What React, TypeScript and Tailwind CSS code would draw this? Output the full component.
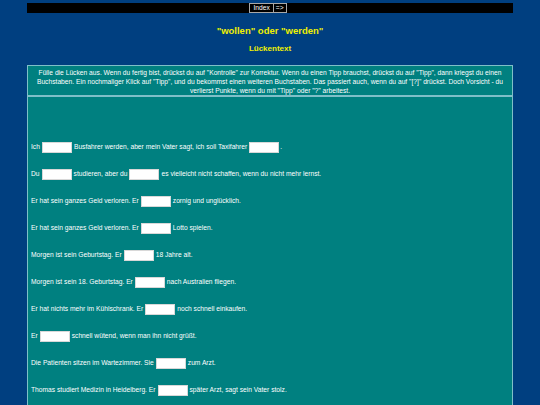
import React from "react";

type Part = string | null;

const rows: Part[][] = [
  ["Ich", null, "Busfahrer werden, aber mein Vater sagt, ich soll Taxifahrer", null, "."],
  ["Du", null, "studieren, aber du", null, "es vielleicht nicht schaffen, wenn du nicht mehr lernst."],
  ["Er hat sein ganzes Geld verloren. Er", null, "zornig und unglücklich."],
  ["Er hat sein ganzes Geld verloren. Er", null, "Lotto spielen."],
  ["Morgen ist sein Geburtstag. Er", null, "18 Jahre alt."],
  ["Morgen ist sein 18. Geburtstag. Er", null, "nach Australien fliegen."],
  ["Er hat nichts mehr im Kühlschrank. Er", null, "noch schnell einkaufen."],
  ["Er", null, "schnell wütend, wenn man ihn nicht grüßt."],
  ["Die Patienten sitzen im Wartezimmer. Sie", null, "zum Arzt."],
  ["Thomas studiert Medizin in Heidelberg. Er", null, "später Arzt, sagt sein Vater stolz."],
];

function Gap({ last }: { last?: boolean }) {
  return (
    <span
      className={
        last
          ? "inline-block w-[30px] h-[11px] bg-white border border-[#d8d8d8] align-middle ml-[2px] mr-[1px]"
          : "inline-block w-[30px] h-[11px] bg-white border border-[#d8d8d8] align-middle mx-[2px]"
      }
    />
  );
}

export default function App() {
  return (
    <div className="h-[405px] overflow-hidden bg-[#003f80] font-['Liberation_Sans',Arial,sans-serif] text-white">
      <div className="mx-auto w-[486px] pt-[3px]">
        <div className="h-[10px] bg-black flex justify-center pr-[4px]">
          <div className="flex h-full text-[6.7px] leading-[8px]">
            <div className="border border-[#a8a8a8] px-[3px] flex items-center">Index</div>
            <div className="border border-[#a8a8a8] border-l-0 px-[2px] flex items-center">=&gt;</div>
          </div>
        </div>
        <h1 className="mt-[12px] text-center font-bold text-[9.5px] leading-[12px] text-[#f0f000]">
          "wollen" oder "werden"
        </h1>
        <h2 className="mt-[7px] text-center font-bold text-[8px] leading-[10px] text-[#f0f000]">
          Lückentext
        </h2>
        <div className="mt-[11px] bg-[#008080] border border-[#7fbfc8]">
          <div className="border-b-2 border-[#7fbfc8] text-center text-[6.7px] leading-[9px] pt-[1.5px] pb-[0.5px]">
            Fülle die Lücken aus. Wenn du fertig bist, drückst du auf "Kontrolle" zur Korrektur. Wenn du einen Tipp brauchst, drückst du auf "Tipp", dann kriegst du einen
            <br />
            Buchstaben. Ein nochmaliger Klick auf "Tipp", und du bekommst einen weiteren Buchstaben. Das passiert auch, wenn du auf "[?]" drückst. Doch Vorsicht - du
            <br />
            verlierst Punkte, wenn du mit "Tipp" oder "?" arbeitest.
          </div>
          <div className="pt-[36.5px] px-[3px] text-[6.7px] pb-[20px]">
            {rows.map((r, i) => (
              <div key={i} className="h-[27px] flex items-center whitespace-nowrap">
                <span>
                  {r.map((p, j) =>
                    p === null ? (
                      <Gap key={j} last={j === r.length - 2 && r[r.length - 1] === "."} />
                    ) : (
                      <span key={j}>{p}</span>
                    )
                  )}
                </span>
              </div>
            ))}
          </div>
        </div>
      </div>
    </div>
  );
}
